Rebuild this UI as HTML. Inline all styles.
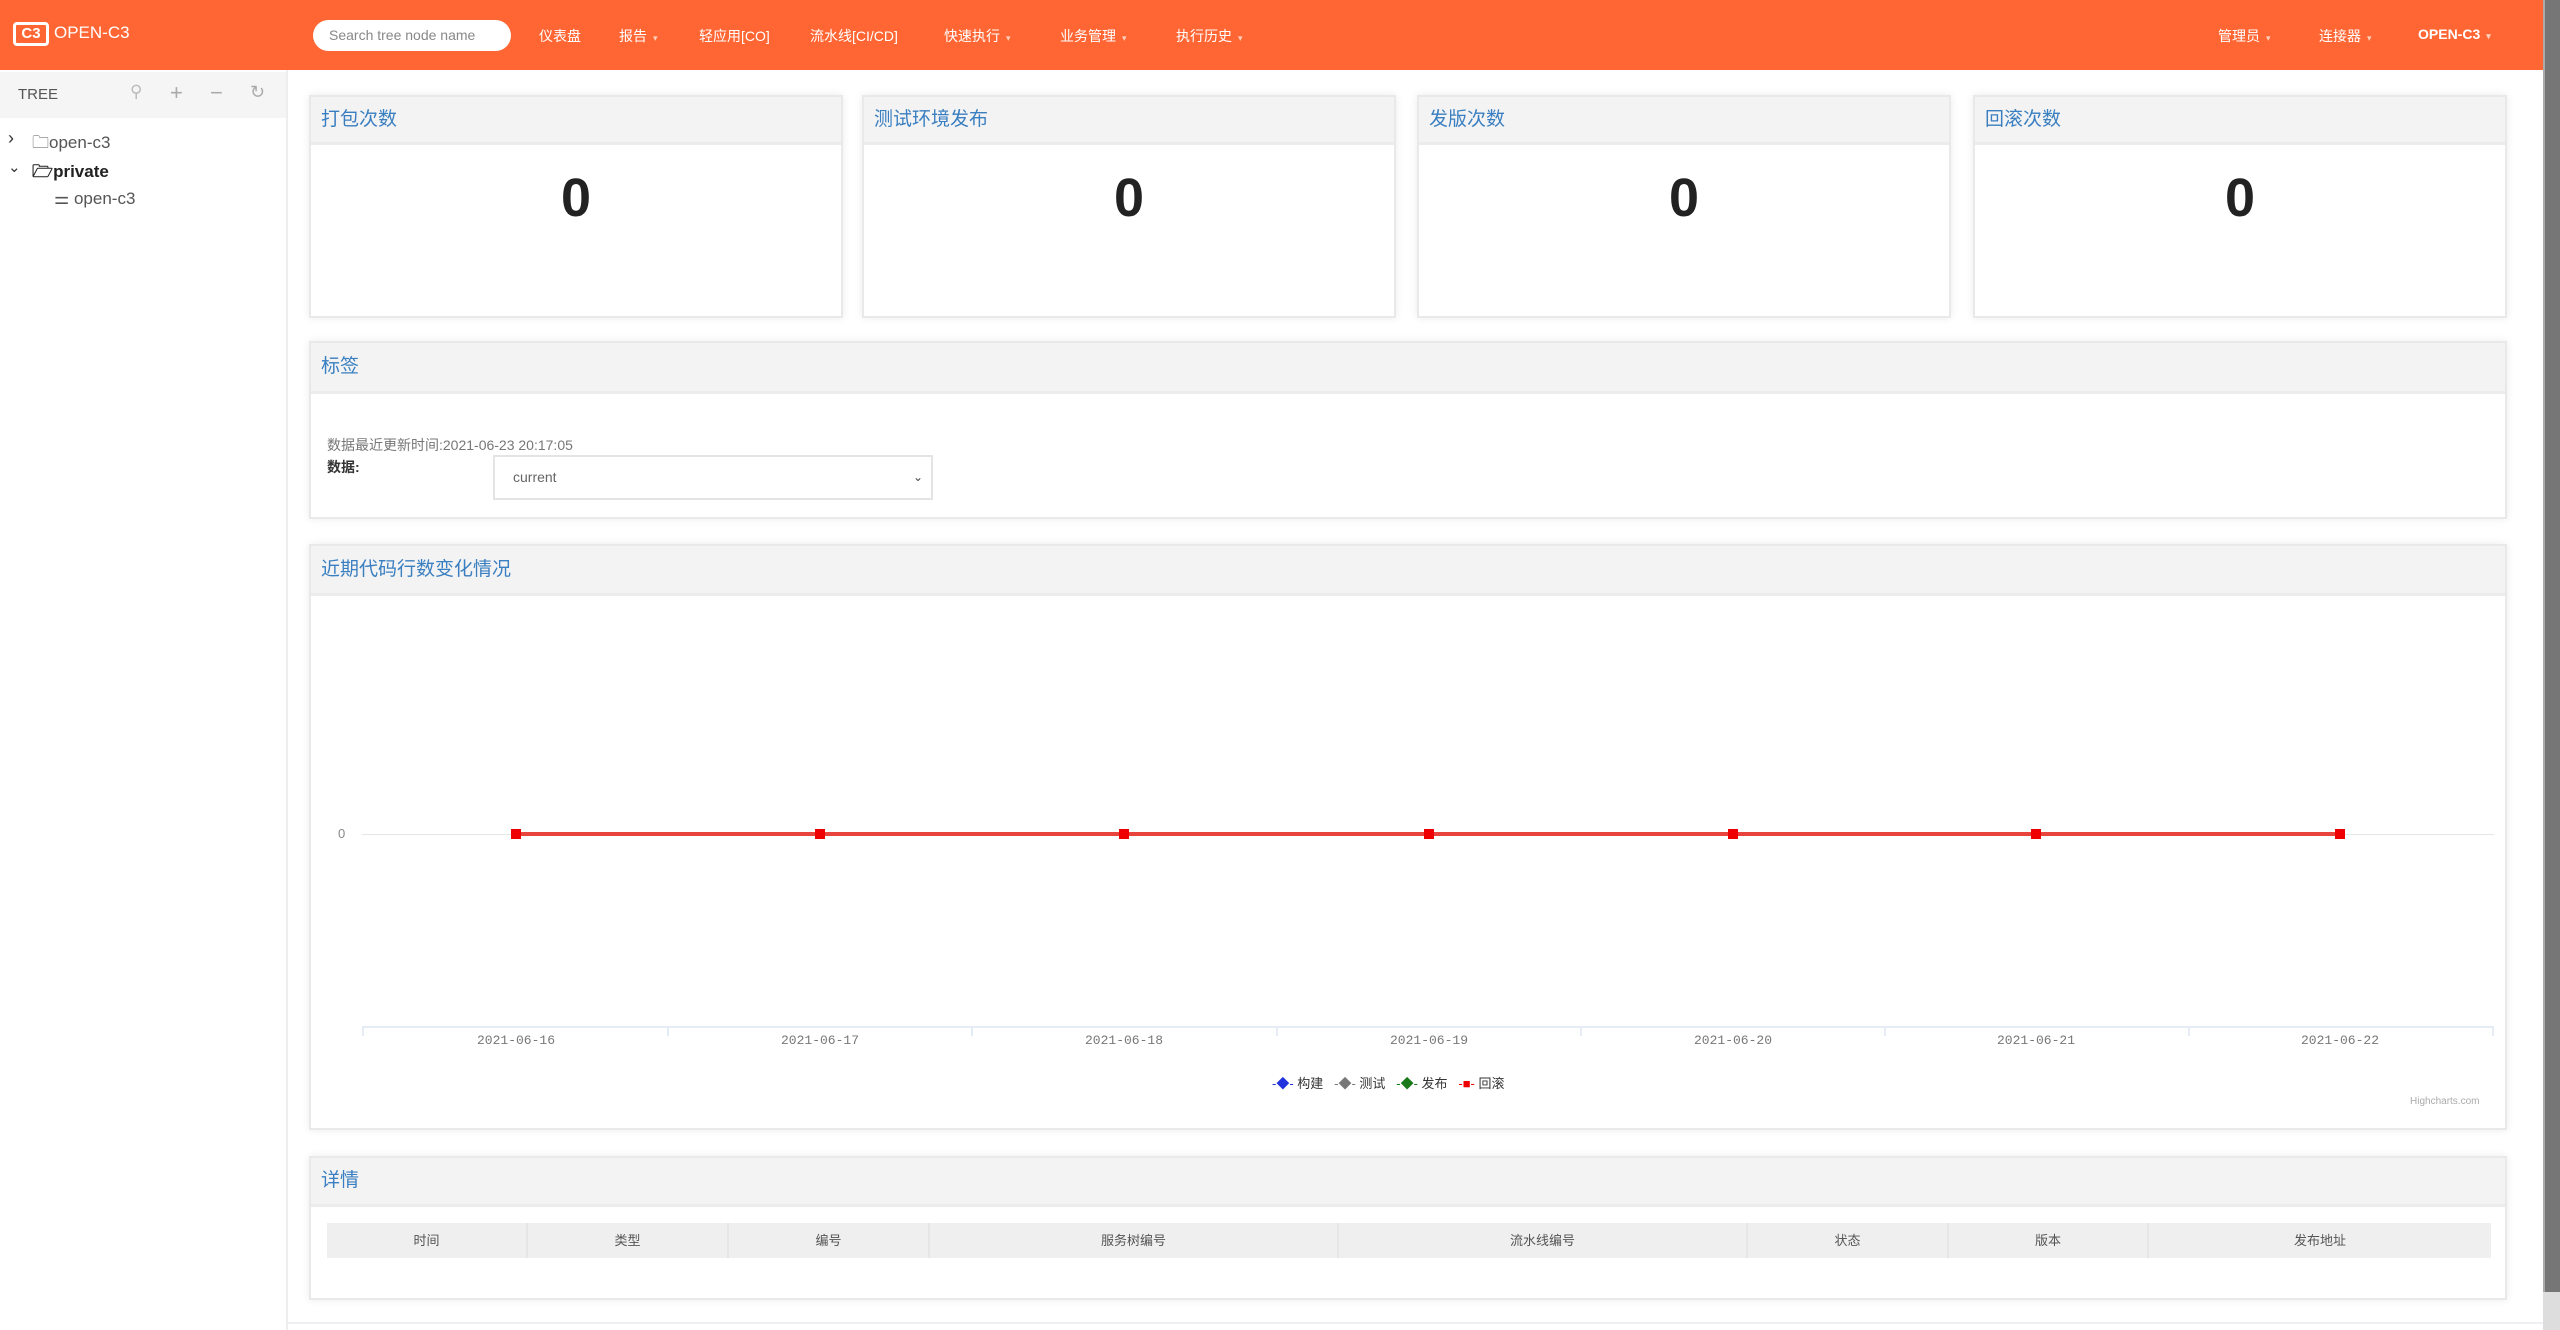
<!DOCTYPE html>
<html><head><meta charset="utf-8"><style>
*{box-sizing:border-box;margin:0;padding:0}
body{width:2560px;height:1330px;overflow:hidden;background:#fff;font-family:"Liberation Sans","Noto Sans CJK SC",sans-serif;position:relative}
.a{position:absolute}
.hdr{left:0;top:0;width:2543px;height:70px;background:#ff6633}
.nav{color:#fff;font-size:14px;top:26px;white-space:nowrap}
.car{font-size:9px;color:#ffd0bb;margin-left:6px}
.side{left:0;top:70px;width:288px;height:1260px;background:#fff;border-right:2px solid #eee}
.panel{background:#fff;border:2px solid #e9e9e9;box-shadow:0 0 8px rgba(0,0,0,.08)}
.ph{position:absolute;left:0;top:0;right:0;background:#f3f3f3;border-bottom:3px solid #ececec;color:#3a7fc1;font-size:19px;padding-left:10px}
.num{position:absolute;left:0;right:0;text-align:center;font-size:54px;font-weight:bold;color:#222}
.th{position:absolute;top:0;height:35px;line-height:35px;text-align:center;font-size:13px;color:#555;border-right:2px solid #e6e6e6}
.dt{position:absolute;top:1033px;font-size:13px;color:#777;width:120px;margin-left:-60px;text-align:center;font-family:"Liberation Mono","Noto Sans CJK SC",monospace}
</style></head><body>
<div class="a hdr"></div>
<div class="a" style="left:13px;top:22px;width:36px;height:24px;border:3px solid #fff;border-radius:4px;color:#fff;font-size:15px;font-weight:bold;line-height:18px;text-align:center">C3</div>
<div class="a nav" style="left:54px;top:23px;font-size:17px">OPEN-C3</div>
<div class="a" style="left:313px;top:20px;width:198px;height:31px;background:#fff;border-radius:16px;color:#888;font-size:14px;line-height:31px;padding-left:16px">Search tree node name</div>
<div class="a nav" style="left:539px">仪表盘</div>
<div class="a nav" style="left:619px">报告<span class="car">▾</span></div>
<div class="a nav" style="left:699px">轻应用[CO]</div>
<div class="a nav" style="left:810px">流水线[CI/CD]</div>
<div class="a nav" style="left:944px">快速执行<span class="car">▾</span></div>
<div class="a nav" style="left:1060px">业务管理<span class="car">▾</span></div>
<div class="a nav" style="left:1176px">执行历史<span class="car">▾</span></div>
<div class="a nav" style="left:2218px">管理员<span class="car">▾</span></div>
<div class="a nav" style="left:2319px">连接器<span class="car">▾</span></div>
<div class="a nav" style="left:2418px;font-weight:bold">OPEN-C3<span class="car">▾</span></div>
<div class="a" style="left:2543px;top:0;width:17px;height:1292px;background:#767676;border-left:2px solid #aaa"></div>
<div class="a" style="left:2543px;top:1292px;width:17px;height:38px;background:#ddd"></div>

<div class="a side"></div>
<div class="a" style="left:0;top:72px;width:286px;height:46px;background:#f5f5f5"></div>
<div class="a" style="left:18px;top:86px;font-size:15px;color:#555">TREE</div>
<div class="a" style="left:130px;top:82px;font-size:17px;color:#bbb;letter-spacing:0">⚲</div>
<div class="a" style="left:170px;top:80px;font-size:22px;color:#aaa">+</div>
<div class="a" style="left:210px;top:80px;font-size:22px;color:#aaa">−</div>
<div class="a" style="left:250px;top:82px;font-size:18px;color:#aaa">↻</div>
<div class="a" style="left:8px;top:128px;font-size:18px;color:#333">›</div>
<div class="a" style="left:32px;top:130px;font-size:17px;color:#555">🗀open-c3</div>
<div class="a" style="left:8px;top:158px;font-size:15px;color:#333">⌄</div>
<div class="a" style="left:32px;top:159px;font-size:17px;color:#222;font-weight:bold">🗁private</div>
<div class="a" style="left:54px;top:189px;font-size:17px;color:#555">⚌ open-c3</div>

<div class="a panel" style="left:309px;top:95px;width:534px;height:223px"><div class="ph" style="height:48px;line-height:46px">打包次数</div><div class="num" style="top:70px">0</div></div>
<div class="a panel" style="left:862px;top:95px;width:534px;height:223px"><div class="ph" style="height:48px;line-height:46px">测试环境发布</div><div class="num" style="top:70px">0</div></div>
<div class="a panel" style="left:1417px;top:95px;width:534px;height:223px"><div class="ph" style="height:48px;line-height:46px">发版次数</div><div class="num" style="top:70px">0</div></div>
<div class="a panel" style="left:1973px;top:95px;width:534px;height:223px"><div class="ph" style="height:48px;line-height:46px">回滚次数</div><div class="num" style="top:70px">0</div></div>

<div class="a panel" style="left:309px;top:341px;width:2198px;height:178px"><div class="ph" style="height:51px;line-height:48px">标签</div>
<div class="a" style="left:16px;top:92px;font-size:14px;color:#777">数据最近更新时间:2021-06-23 20:17:05</div>
<div class="a" style="left:16px;top:114px;font-size:14px;color:#333;font-weight:bold">数据:</div>
<div class="a" style="left:182px;top:112px;width:440px;height:45px;border:2px solid #e4e4e4;font-size:14px;color:#666;line-height:41px;padding-left:18px">current<span style="position:absolute;right:8px;color:#444;font-size:12px">⌄</span></div>
</div>

<div class="a panel" style="left:309px;top:544px;width:2198px;height:586px"><div class="ph" style="height:50px;line-height:48px">近期代码行数变化情况</div></div>
<div class="a" style="left:362px;top:834px;width:2132px;height:1px;background:#e6e6e6"></div>
<div class="a" style="left:338px;top:826px;font-size:13px;color:#888">0</div>
<div class="a" style="left:516px;top:832px;width:1824px;height:4px;background:#e8433c"></div>
<div class="a" style="left:511px;top:829px;width:10px;height:10px;background:#e00"></div>
<div class="a" style="left:815px;top:829px;width:10px;height:10px;background:#e00"></div>
<div class="a" style="left:1119px;top:829px;width:10px;height:10px;background:#e00"></div>
<div class="a" style="left:1424px;top:829px;width:10px;height:10px;background:#e00"></div>
<div class="a" style="left:1728px;top:829px;width:10px;height:10px;background:#e00"></div>
<div class="a" style="left:2031px;top:829px;width:10px;height:10px;background:#e00"></div>
<div class="a" style="left:2335px;top:829px;width:10px;height:10px;background:#e00"></div>
<div class="a" style="left:362px;top:1026px;width:2132px;height:2px;background:#e6ecf5"></div>
<div class="a" style="left:362px;top:1026px;width:2px;height:10px;background:#e6ecf5"></div>
<div class="a" style="left:667px;top:1026px;width:2px;height:10px;background:#e6ecf5"></div>
<div class="a" style="left:971px;top:1026px;width:2px;height:10px;background:#e6ecf5"></div>
<div class="a" style="left:1276px;top:1026px;width:2px;height:10px;background:#e6ecf5"></div>
<div class="a" style="left:1580px;top:1026px;width:2px;height:10px;background:#e6ecf5"></div>
<div class="a" style="left:1884px;top:1026px;width:2px;height:10px;background:#e6ecf5"></div>
<div class="a" style="left:2188px;top:1026px;width:2px;height:10px;background:#e6ecf5"></div>
<div class="a" style="left:2492px;top:1026px;width:2px;height:10px;background:#e6ecf5"></div>
<div class="dt a" style="left:516px">2021-06-16</div>
<div class="dt a" style="left:820px">2021-06-17</div>
<div class="dt a" style="left:1124px">2021-06-18</div>
<div class="dt a" style="left:1429px">2021-06-19</div>
<div class="dt a" style="left:1733px">2021-06-20</div>
<div class="dt a" style="left:2036px">2021-06-21</div>
<div class="dt a" style="left:2340px">2021-06-22</div>
<div class="a" style="left:1272px;top:1073px;font-size:13px;color:#333;white-space:nowrap">
<span style="color:#2233dd">-◆-</span> 构建&nbsp;&nbsp;&nbsp;<span style="color:#777">-◆-</span> 测试&nbsp;&nbsp;&nbsp;<span style="color:#1a7a1a">-◆-</span> 发布&nbsp;&nbsp;&nbsp;<span style="color:#e00">-■-</span> 回滚</div>
<div class="a" style="left:2410px;top:1096px;font-size:10px;color:#aaa">Highcharts.com</div>

<div class="a panel" style="left:309px;top:1156px;width:2198px;height:144px"><div class="ph" style="height:49px;line-height:46px">详情</div>
<div class="a" style="left:16px;top:65px;width:2164px;height:35px;background:#efefef">
<div class="th" style="left:0;width:201px">时间</div>
<div class="th" style="left:201px;width:201px">类型</div>
<div class="th" style="left:402px;width:201px">编号</div>
<div class="th" style="left:603px;width:409px">服务树编号</div>
<div class="th" style="left:1012px;width:409px">流水线编号</div>
<div class="th" style="left:1421px;width:201px">状态</div>
<div class="th" style="left:1622px;width:200px">版本</div>
<div class="th" style="left:1822px;width:342px;border-right:0">发布地址</div>
</div></div>
<div class="a" style="left:288px;top:1322px;width:2255px;height:2px;background:#eef0f3"></div>
</body></html>
